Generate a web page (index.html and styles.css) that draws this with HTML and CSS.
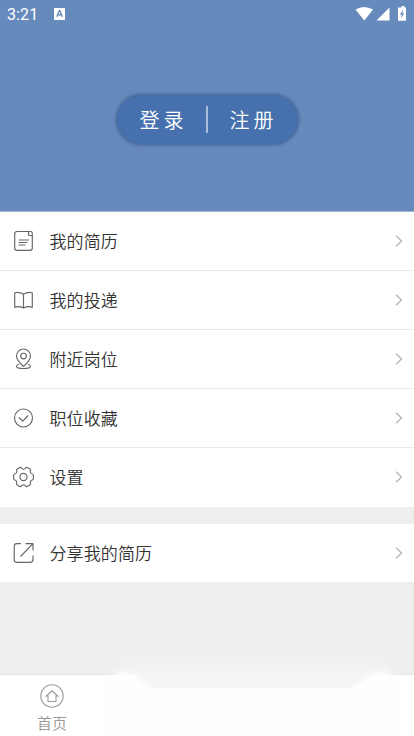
FILE: index.html
```html
<!DOCTYPE html>
<html lang="zh-CN">
<head>
<meta charset="utf-8">
<title>我的</title>
<link rel="stylesheet" href="styles.css">
</head>
<body>
<div class="app">
  <header class="hero">
    <div class="status">
      <span class="time">3:21</span>
      <svg class="notice" width="11" height="12" viewBox="0 0 11 12"><rect width="11" height="12" rx="1" fill="#fff"/><path d="M2.8 8.8 5.3 2.6h.5l2.5 6.2M3.8 6.8h3.6" fill="none" stroke="#5f7fae" stroke-width="1.3"/></svg>
      <svg class="signals" width="54" height="16" viewBox="0 0 54 16" fill="#fff"><path d="M.5 3.500Q9-1.500 18 3.500L9.300 14.500Z"/><path d="M34.500 1.500V14.500H21.500Z"/><path d="M45 1.500h1.500V0h3v1.500H51V14.800h-8V1.500Z"/><path d="M48.300 3.500 44.800 8.600h2l-.8 4 3.300-5.200h-2Z" fill="#6689bd"/></svg>
    </div>
    <div class="auth">
      <span class="auth-link">登录</span>
      <span class="auth-line"></span>
      <span class="auth-link">注册</span>
    </div>
  </header>
  <main class="content">
    <nav class="menu">
      <div class="row">
        <svg class="icon" viewBox="0 0 22 22"><path d="M15.500 1.500H4Q1.700 1.500 1.700 4V18Q1.700 20.300 4 20.300H17Q19.300 20.300 19.300 18V5.500H16.500Q15.500 5.500 15.500 4.500ZM15.500 1.500H17.500Q19.300 1.500 19.300 3.300V5.500M6 10h10M5.500 12.500h9M5.500 15h7"/></svg>
        <span class="label">我的简历</span>
        <svg class="arrow" viewBox="0 0 8 12"><path d="m1 .8 5.500 5.200L1 11.200"/></svg>
      </div>
      <div class="row">
        <svg class="icon" viewBox="0 0 22 22"><path d="M10.500 5Q6 2.500 1.700 3.700V18.300Q6 16.700 10.500 19Q15 16.700 19.300 18.300V3.700Q15 2.500 10.500 5V19"/></svg>
        <span class="label">我的投递</span>
        <svg class="arrow" viewBox="0 0 8 12"><path d="m1 .8 5.500 5.200L1 11.200"/></svg>
      </div>
      <div class="row">
        <svg class="icon" viewBox="0 0 22 22"><path d="M10.500 18.500Q3.500 12 3.500 8A7 7 0 0 1 17.500 8Q17.500 12 10.500 18.500Z"/><circle cx="10.500" cy="8" r="2.800"/><path d="M6.200 16.200Q3.500 16.800 3.500 18.200C3.500 19.700 6.500 20.500 10.500 20.500S17.500 19.700 17.500 18.200Q17.500 16.800 14.800 16.200"/></svg>
        <span class="label">附近岗位</span>
        <svg class="arrow" viewBox="0 0 8 12"><path d="m1 .8 5.500 5.200L1 11.200"/></svg>
      </div>
      <div class="row">
        <svg class="icon" viewBox="0 0 22 22"><circle cx="10.500" cy="11" r="9"/><path d="m6 10.500 3.700 3.700 5.600-5.700"/></svg>
        <span class="label">职位收藏</span>
        <svg class="arrow" viewBox="0 0 8 12"><path d="m1 .8 5.500 5.200L1 11.200"/></svg>
      </div>
      <div class="row">
        <svg class="icon" viewBox="0 0 22 22"><path d="M8.800 2.600Q8.100 1 6.800 1.600L4.200 3.100Q3 3.900 3.800 5.300Q4 7.300 2.200 7.800Q.6 8 .6 9.500V12.500Q.6 14 2.200 14.200Q4 14.700 3.800 16.700Q3 18.100 4.200 18.900L6.800 20.400Q8.100 21 8.800 19.400Q10.500 18.200 12.200 19.400Q12.900 21 14.200 20.400L16.800 18.900Q18 18.100 17.200 16.700Q17 14.700 18.800 14.200Q20.400 14 20.400 12.500V9.500Q20.400 8 18.800 7.800Q17 7.300 17.200 5.300Q18 3.900 16.800 3.100L14.200 1.600Q12.900 1 12.200 2.600Q10.500 3.800 8.800 2.600Z"/><circle cx="10.500" cy="11" r="3.600"/></svg>
        <span class="label">设置</span>
        <svg class="arrow" viewBox="0 0 8 12"><path d="m1 .8 5.500 5.200L1 11.200"/></svg>
      </div>
    </nav>
    <nav class="menu share">
      <div class="row">
        <svg class="icon" viewBox="0 0 22 22"><path d="M8 1.600H4Q1.200 1.600 1.200 4.500V17.500Q1.200 20.400 4 20.400H17Q20 20.400 20 17.500V13.500M12.500 1.600H20V8.500M20 1.600 7.500 14.500"/></svg>
        <span class="label">分享我的简历</span>
        <svg class="arrow" viewBox="0 0 8 12"><path d="m1 .8 5.500 5.200L1 11.200"/></svg>
      </div>
    </nav>
  </main>
  <footer class="tabs">
    <svg class="haze" viewBox="0 0 314 96">
      <defs>
        <linearGradient id="fade" x1="0" y1="0" x2="0" y2="1"><stop offset="0" stop-color="#fff" stop-opacity="0"/><stop offset="1" stop-color="#fff" stop-opacity=".5"/></linearGradient>
        <linearGradient id="sides"><stop offset="0" stop-color="#000"/><stop offset=".12" stop-color="#fff"/><stop offset=".88" stop-color="#fff"/><stop offset="1" stop-color="#000"/></linearGradient>
        <mask id="edges"><rect width="314" height="96" fill="url(#sides)"/></mask>
        <filter id="soft" x="-40%" y="-40%" width="180%" height="180%"><feGaussianBlur stdDeviation="3"/></filter>
      </defs>
      <path d="M40 34H274V48.500H40Z" fill="#eee"/>
      <path d="M0 0H314V48.500H0Z" fill="url(#fade)" mask="url(#edges)"/>
      <path d="M14 38 26 32H36L55 50V64H14ZM300 38 290 32H278L256 50V64H300Z" fill="#fff" filter="url(#soft)"/>
      <path d="M8 37 32 35 51 48.500H256L278 35 306 37V96H8Z" fill="#fefefe"/>
    </svg>
    <div class="tab">
      <svg class="home" viewBox="0 0 24 24"><circle cx="12" cy="12" r="11.200"/><path d="M6.300 12 12 6.800 17.700 12H16V17.500H8V12Z"/></svg>
      <span>首页</span>
    </div>
  </footer>
</div>
</body>
</html>
```
FILE: styles.css
```css
* { box-sizing: border-box; }
body {
  margin: 0;
  font-family: "Noto Sans CJK SC", sans-serif;
  font-weight: 350;
  color: #333;
  background: #eee;
}
.app {
  display: flex;
  flex-direction: column;
  height: 736px;
  overflow: hidden;
}
.hero {
  height: 212px;
  flex: none;
  display: flex;
  flex-direction: column;
  align-items: center;
  background: #678abd;
  border-bottom: 1px solid #9db3d4;
}
.status {
  width: 100%;
  height: 28px;
  display: flex;
  align-items: center;
  padding: 0 5px 0 7px;
  color: #fff;
}
.time {
  width: 47px;
  padding-top: 1px;
  font: 400 16px/28px Roboto, sans-serif;
  letter-spacing: .1px;
}
.signals { margin-left: auto; }
.auth {
  display: flex;
  align-items: center;
  width: 181px;
  height: 49px;
  margin-top: 67px;
  padding-left: 23px;
  border-radius: 25px;
  background: #4671ae;
  box-shadow: 0 0 4px rgba(30, 55, 95, .75);
  color: #fff;
}
.auth-link {
  font-size: 20px;
  line-height: 50px;
  letter-spacing: 4px;
  white-space: nowrap;
}
.auth-line {
  width: 2px;
  height: 27px;
  margin: 0 22px 0 18px;
  background: #a9bedd;
}
.content { flex: 1; }
.menu { background: #fff; }
.row {
  display: flex;
  align-items: center;
  height: 59px;
  padding: 0 11px 0 12.5px;
  border-bottom: 1px solid #e9e9e9;
}
.row:last-child { border-bottom-color: #fff; }
.share { margin-top: 17px; }
.share .row { height: 58px; }
.icon {
  width: 22px;
  height: 22px;
  fill: none;
  stroke: #666;
  stroke-width: 1.15;
  stroke-linejoin: round;
}
.label {
  flex: 1;
  margin-left: 15px;
  font-size: 17px;
  line-height: 24px;
  letter-spacing: .1px;
}
.arrow {
  width: 8px;
  height: 12px;
  fill: none;
  stroke: #b5b5b5;
  stroke-width: 1.3;
}
.tabs {
  position: relative;
  flex: none;
  height: 62px;
  background: #fff;
  border-top: 1px solid #e3e3e3;
}
.haze {
  position: absolute;
  left: 96px;
  bottom: 0;
  width: 314px;
  height: 96px;
}
.tab {
  display: flex;
  flex-direction: column;
  align-items: center;
  width: 104px;
  padding-top: 9px;
  color: #999;
  font-size: 15px;
  line-height: 22px;
}
.home {
  width: 24px;
  height: 24px;
  margin-bottom: 4px;
  fill: none;
  stroke: #999;
  stroke-width: 1.1;
}
```
